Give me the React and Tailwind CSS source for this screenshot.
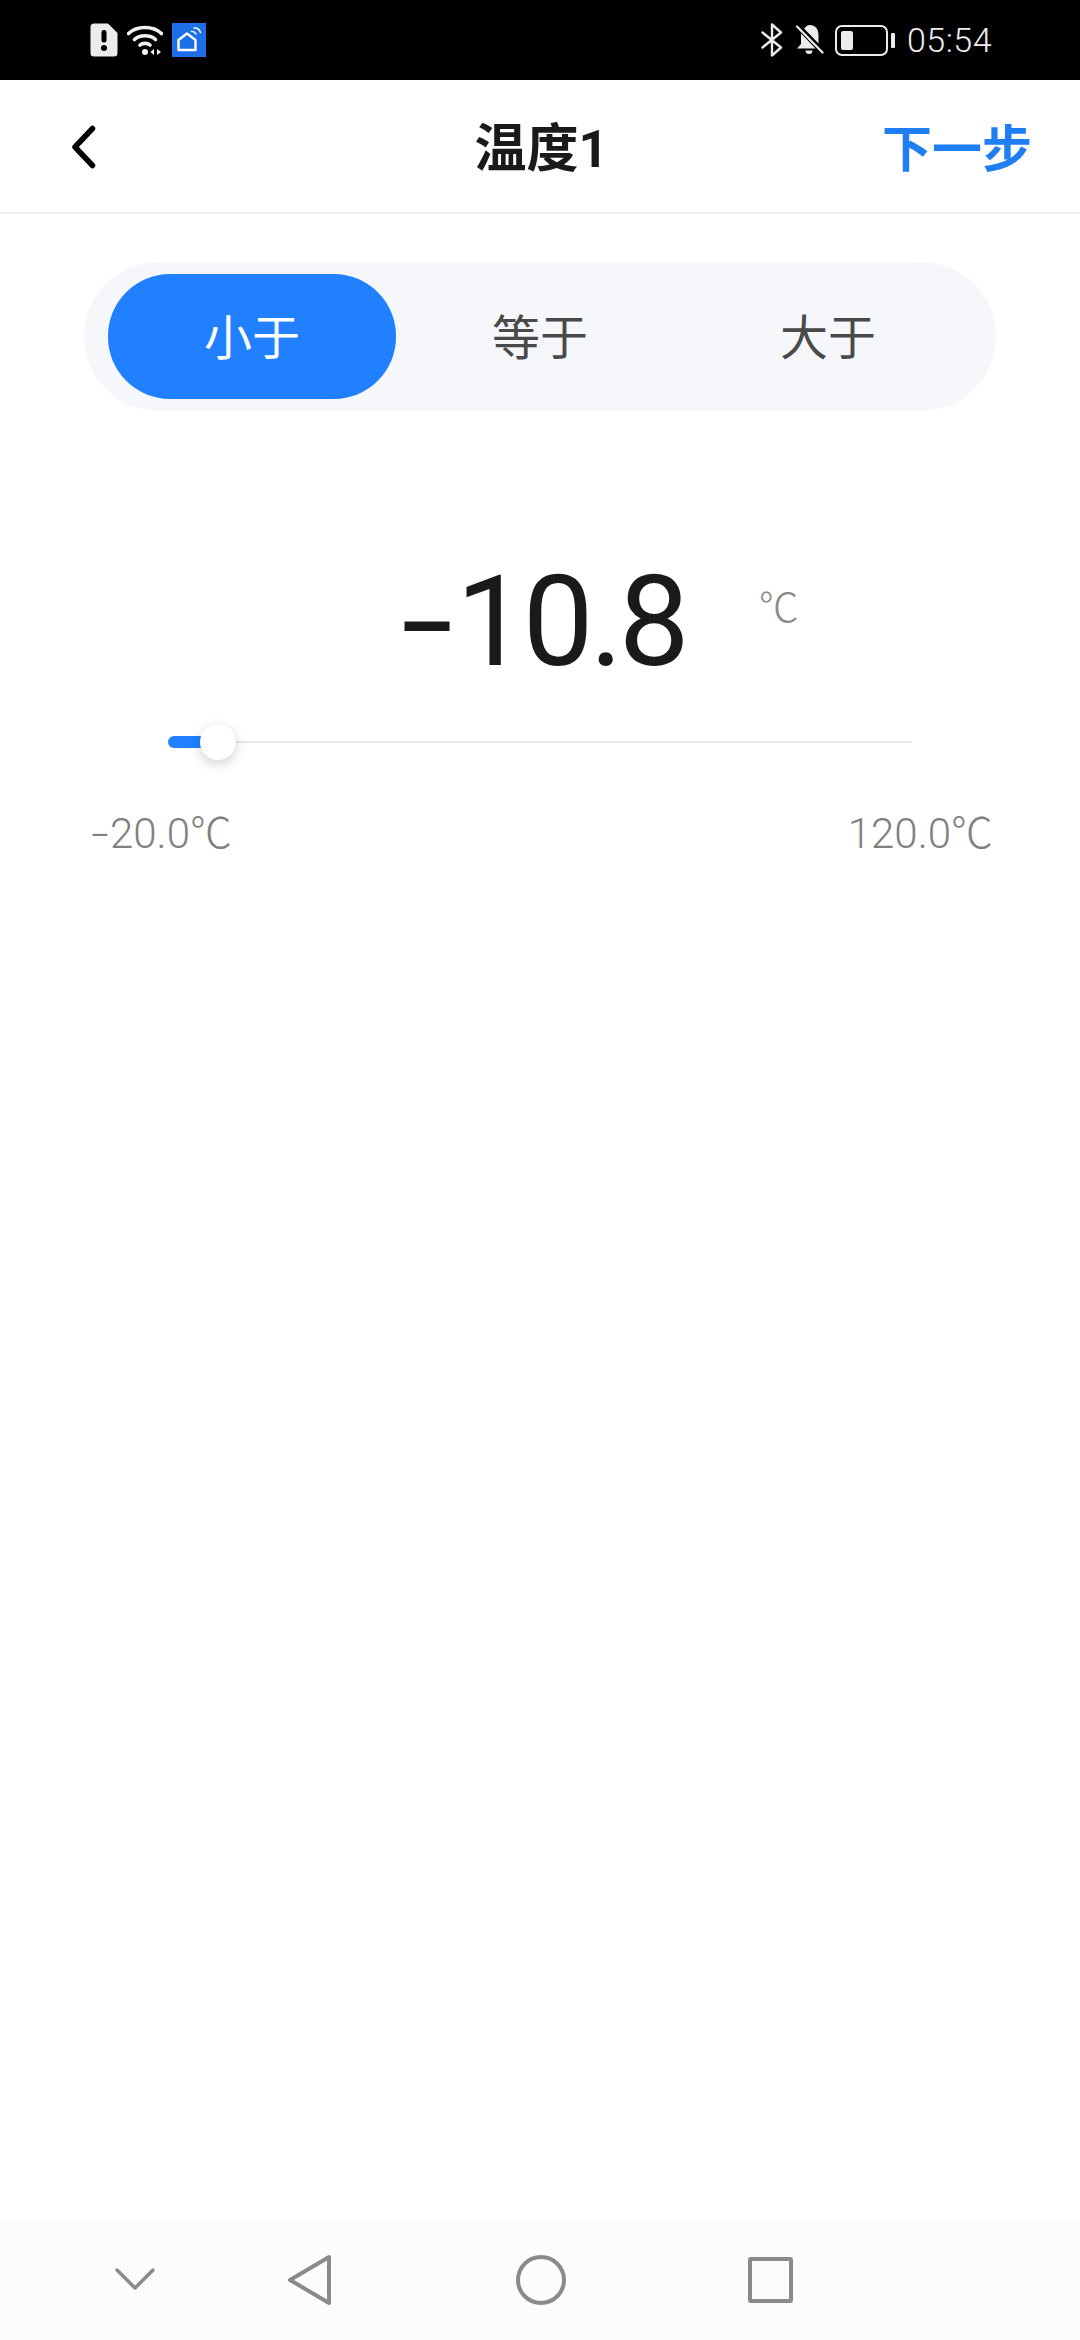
const cjk = "font-['Roboto','Noto_Sans_CJK_SC',sans-serif]";

function StatusBar() {
  return (
    <div className="h-[80px] bg-black flex items-center justify-between pl-[90px] pr-[88px] shrink-0">
      <div className="flex items-center gap-[9px]">
        <svg width="28" height="34" viewBox="0 0 28 34">
          <path d="M4 0.5h14l9.5 9.5v20a3.5 3.5 0 0 1-3.5 3.5H4A3.5 3.5 0 0 1 .5 30V4A3.5 3.5 0 0 1 4 .5z" fill="#ececec" />
          <rect x="11.5" y="7" width="5" height="12.5" rx="2.2" fill="#000" />
          <circle cx="14" cy="25" r="3" fill="#000" />
        </svg>
        <svg width="36" height="32" viewBox="0 0 36 32" fill="none" stroke="#f2f2f2" strokeLinecap="round">
          <path d="M1.5 9.5C10 1.500 26 1.500 34.500 9.500" strokeWidth="3.600" />
          <path d="M7.500 15.500C13 10.500 23 10.500 28.500 15.500" strokeWidth="3.600" />
          <path d="M13 21C15.500 18.800 20.500 18.800 23 21" strokeWidth="3.600" />
          <circle cx="18" cy="28" r="3" fill="#f2f2f2" stroke="none" />
          <path d="M27 25L27 31L23.300 28Z" fill="#f2f2f2" stroke="none" />
          <path d="M30 25L30 31L34 28Z" fill="#f2f2f2" stroke="none" />
        </svg>
        <div className="w-[34px] h-[34px] bg-[#1c6fe6] flex items-center justify-center">
          <svg width="28" height="28" viewBox="0 0 28 28" fill="none" stroke="#fff" strokeLinejoin="round" strokeLinecap="round">
            <path d="M3.500 14L12 7.500l8.500 6.500V24h-17z" strokeWidth="2.400" />
            <path d="M16.500 5.500c2-.3 3.500.5 4.500 2.500M19 2c3-.3 5.500 1.500 6.500 4.500" strokeWidth="1.500" />
          </svg>
        </div>
      </div>
      <div className="flex items-center text-[#ececec]">
        <svg width="22" height="34" viewBox="0 0 22 34" fill="none" stroke="#ececec" strokeWidth="2.400" strokeLinecap="round" strokeLinejoin="round">
          <path d="M1.500 9.500L20 24.500L11 32.500V1.500L20 9.500L1.500 24.500" />
        </svg>
        <svg className="ml-[11px]" width="30" height="32" viewBox="0 0 30 32">
          <path d="M7 9.500L21.500 24.500H3L7 20z" fill="#ececec" />
          <path d="M10 4.500C12 2.800 13 1 16 1c5 0 8.500 3.800 8.500 10v8.500z" fill="#ececec" />
          <path d="M11.500 26.500h7a3.500 3.500 0 0 1-7 0z" fill="#ececec" />
          <path d="M3 2.500L28.500 28.500" stroke="#ececec" strokeWidth="2.200" strokeLinecap="round" />
        </svg>
        <div className="ml-[11px] w-[53px] h-[31px] border-[2px] border-[#ececec] rounded-[7px] p-[4px]">
          <div className="w-[12px] h-full bg-[#ececec] rounded-[2px]" />
        </div>
        <div className="ml-[3px] w-[4px] h-[15px] bg-[#ececec] rounded-[1px]" />
        <div className="ml-[12px] text-[34px] leading-[40px] font-light tracking-[0.5px] font-['Roboto',sans-serif] text-[#eeeeee]">05:54</div>
      </div>
    </div>
  );
}

function Header() {
  return (
    <div className="h-[134px] bg-white border-b-2 border-[#eeeeee] flex items-center justify-between pl-[70px] pr-[50px] shrink-0">
      <div className="w-[131px]">
        <svg width="26" height="44" viewBox="0 0 26 44" fill="none" stroke="#000" strokeWidth="5.500" strokeLinecap="round" strokeLinejoin="round" className="mt-[1px]">
          <path d="M22.500 3.500L5 22l17.500 18.500" />
        </svg>
      </div>
      <div className={`${cjk} text-[52px] leading-[60px] font-bold text-[#1a1a1a] mt-[8px]`}>温度1</div>
      <div className={`${cjk} w-[148px] text-[50px] leading-[60px] font-bold text-[#1f7ff2] whitespace-nowrap mt-[8px]`}>下一步</div>
    </div>
  );
}

function Tabs() {
  return (
    <div className="mt-[48px] mx-[84px] h-[149px] rounded-[75px] bg-[#f6f7fa] flex items-center pl-[24px] pr-[24px] shrink-0">
      {["小于", "等于", "大于"].map((t, i) => (
        <div
          key={t}
          className={
            i === 0
              ? `${cjk} flex-1 h-[125px] rounded-[62px] bg-[#2180ff] text-white flex items-center justify-center text-[48px] pt-[4px]`
              : `${cjk} flex-1 h-[125px] rounded-[62px] text-[#4a4a4a] flex items-center justify-center text-[48px] pt-[4px]`
          }
        >
          {t}
        </div>
      ))}
    </div>
  );
}

function Value() {
  return (
    <div className={`mt-[146px] h-[133px] flex items-start pl-[401px] shrink-0 ${cjk}`}>
      <div className="text-[126px] leading-[130px] text-[#1a1a1a] tracking-[-4px] whitespace-nowrap">
        <span className="inline-block w-[55px] origin-left scale-x-[1.5]">-</span>10.8
      </div>
      <div className="ml-[73px] mt-[27px] text-[40px] leading-[50px] text-[#8a8a8a] font-light">℃</div>
    </div>
  );
}

function Slider() {
  return (
    <div className="mt-[34px] mx-[168px] h-[36px] relative flex items-center shrink-0">
      <div className="w-full h-[2px] bg-[#e6e6e6]" />
      <div className="absolute left-0 top-[12px] w-[40px] h-[12px] rounded-l-[6px] bg-[#2180ff]" />
      <div className="absolute left-[32px] top-0 w-[36px] h-[36px] rounded-full bg-white shadow-[0_4px_12px_rgba(0,0,0,0.18)]" />
    </div>
  );
}

function Labels() {
  return (
    <div className={`mt-[51px] pl-[91px] pr-[87px] flex justify-between shrink-0 text-[42px] leading-[46px] text-[#808080] font-light ${cjk}`}>
      <div className="whitespace-nowrap">
        <span className="inline-block w-[19px] origin-left scale-x-[1.5]">-</span>20.0℃
      </div>
      <div className="whitespace-nowrap">120.0℃</div>
    </div>
  );
}

function NavBar() {
  return (
    <div className="h-[120px] bg-[#fcfcfc] flex items-start pt-[34px] pl-[114px] shrink-0">
      <svg width="42" height="24" viewBox="0 0 42 24" fill="none" stroke="#8a8a8a" strokeWidth="3.500" strokeLinecap="round" strokeLinejoin="round" className="mt-[13px]">
        <path d="M3 3l18 18L39 3" />
      </svg>
      <svg width="46" height="52" viewBox="0 0 46 52" fill="none" stroke="#8a8a8a" strokeWidth="4" strokeLinejoin="round" className="ml-[131px]">
        <path d="M42 3L3 26l39 23z" />
      </svg>
      <div className="ml-[183px] w-[50px] h-[50px] rounded-full border-[4px] border-[#8a8a8a] mt-[1px]" />
      <div className="ml-[182px] w-[45px] h-[46px] rounded-[3px] border-[4px] border-[#8a8a8a] mt-[3px]" />
    </div>
  );
}

export default function App() {
  return (
    <div className="w-[1080px] h-[2340px] bg-white flex flex-col overflow-hidden">
      <StatusBar />
      <Header />
      <Tabs />
      <Value />
      <Slider />
      <Labels />
      <div className="flex-1" />
      <NavBar />
    </div>
  );
}
